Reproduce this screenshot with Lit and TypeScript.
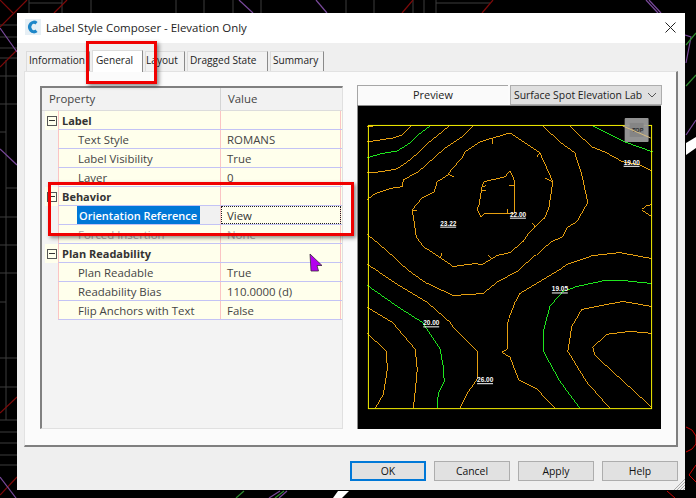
import { LitElement, html, css, svg } from "lit";
import { customElement } from "lit/decorators.js";

type Row = { name: string; value?: string; cat?: boolean; dim?: boolean; sel?: boolean };

const ROWS: Row[] = [
  { name: "Label", cat: true },
  { name: "Text Style", value: "ROMANS" },
  { name: "Label Visibility", value: "True" },
  { name: "Layer", value: "0" },
  { name: "Behavior", cat: true },
  { name: "Orientation Reference", value: "View", sel: true },
  { name: "Forced Insertion", value: "None", dim: true },
  { name: "Plan Readability", cat: true },
  { name: "Plan Readable", value: "True" },
  { name: "Readability Bias", value: "110.0000 (d)" },
  { name: "Flip Anchors with Text", value: "False" },
];

// label, width, left padding
const TABS: [string, number, number][] = [
  ["Information", 64, 2],
  ["General", 51, 3],
  ["Layout", 40, 0],
  ["Dragged State", 81, 2],
  ["Summary", 54, 2],
];

const ORANGE = [
  "367,127 373,126",
  "367,142 393,138 402,135 411,126",
  "367,173 380,172 397,169 407,162 418,153 428,143 438,135 449,126",
  "367,200 373,195 380,192 393,188 402,187 403,180 418,172 435,157 445,148 462,137 473,126",
  "412,210 422,198 434,192 437,182 448,175 451,170 462,158 465,152 480,142 493,138 510,133 540,153 553,182 549,208 545,218 530,232 523,242 510,253 497,256 482,265 475,264 453,267 440,258 423,247 416,237 412,210",
  "492,139 493,144", "540,153 537,157", "553,182 545,178", "532,223 535,227", "487,255 491,259", "440,258 442,253", "412,211 417,211", "449,175 454,177",
  "484,182 505,177 510,171 515,182 514,214 484,214 481,217 477,210 479,205 482,187 484,182",
  "482,187 486,186", "481,191 486,191", "509,186 514,186", "507,209 507,214",
  "543,126 560,142 575,153 582,175 588,203 577,222 567,228 563,237 552,242 542,250 527,263 517,272 498,282 483,294 470,295 453,296 425,283 407,270 393,257 377,243 367,235",
  "367,265 375,270 397,285 427,303 450,323 453,328 477,352 477,380 468,393 460,409",
  "367,308 392,323 415,350 417,370 415,392 413,409",
  "367,334 386,352 387,370 383,395 375,409",
  "652,259 620,253 593,256 567,265 560,270 520,294 515,303 507,324 507,350 502,353 510,358 519,381 537,390 555,409",
  "652,307 623,302 582,310 572,327 568,352 587,383 610,409",
  "652,334 630,332 607,335 593,348 595,356 652,408",
  "652,205 647,206 642,210 652,217",
  "570,126 592,147 605,152 623,162 640,165 652,171",
];

const GREEN = [
  "367,158 380,154 397,151 410,143 418,135 430,126",
  "593,126 625,142 653,152",
  "367,286 397,307 422,323 440,350 443,367 444,382 438,395 437,409",
  "652,284 623,281 605,281 577,287 563,292 550,307 544,330 544,353 560,382 580,409",
];

const SPOTS: [number, number, string][] = [
  [440, 226, "23.22"], [510, 217, "22.00"], [624, 165, "19.00"],
  [423, 326, "20.00"], [552, 292, "19.05"], [477, 383, "26.00"],
];

const GRAY_LINES = [
  "29,0 29,13", "62,0 62,13", "91,0 91,13", "176,0 176,13", "204,0 204,13", "233,0 233,13", "261,0 261,13",
  "346,0 346,13", "374,0 374,13", "413,0 413,13", "424,0 424,13", "436,0 436,13", "29,3 62,3", "436,3 490,3",
  "6,60 6,420",
  ...[25, 37, 48, 58, 76, 104, 217, 245, 273, 358, 387, 420, 432, 443, 455, 465].map((y) => `0,${y} 17,${y}`),
  "0,132 6,132", "0,302 6,302", "6,188 17,188",
];

const RED_LINES = [
  "0,0 13,13", "27,0 0,27", "17,50 0,67", "17,397 0,413", "17,477 0,495", "67,0 54,13", "413,0 402,13", "493,0 482,13",
  "686,427 692,430 696,436 696,444 692,449 686,452", "696,465 689,475 696,482", "667,491 675,498",
];

const PURPLE_LINES = [
  "0,28 17,52", "0,149 17,165", "0,477 16,498", "239,0 253,13", "316,0 327,13", "649,0 661,13", "646,0 658,13",
  "685,35 691,37 686,63", "686,135 696,120", "280,491 269,498", "287,491 279,498",
];

const GREEN_LINES = ["686,45 696,33", "686,86 696,75", "244,491 236,498", "284,491 275,498"];

@customElement("app-root")
export class AppRoot extends LitElement {
  static styles = css`
    :host {
      display: block;
      position: relative;
      width: 696px;
      height: 498px;
      overflow: hidden;
      background: #000;
      font-family: "Open Sans", sans-serif;
      font-size: 11.4px;
      color: #222;
    }
    .cad {
      position: absolute;
      inset: 0;
    }
    .cad polyline {
      fill: none;
    }
    .l-gray { stroke: #3c3c3c; }
    .l-red { stroke: #7d0a0a; stroke-width: 1.2; }
    .l-red2 { stroke: #d00000; }
    .l-purple { stroke: #7a4a9c; stroke-width: 1.2; }
    .l-green { stroke: #2f8a2f; stroke-width: 1.2; }

    .dialog {
      position: absolute;
      left: 17px;
      top: 13px;
      width: 668px;
      height: 477px;
      background: #efefef;
      display: flex;
      flex-direction: column;
    }
    .titlebar {
      height: 30px;
      box-sizing: border-box;
      background: #fff;
      display: flex;
      align-items: center;
      padding: 0 9px 2px 8px;
      gap: 5px;
      font-size: 11.45px;
      color: #222;
    }
    .titlebar .title {
      flex: 1;
    }
    .logo {
      width: 16px;
      height: 16px;
      background: #e6eff5;
      display: block;
    }
    .tabs {
      display: flex;
      align-items: flex-end;
      gap: 2px;
      height: 20px;
      margin: 8px 0 0 9px;
      font-size: 10.1px;
    }
    .tab {
      height: 20px;
      line-height: 17px;
      background: #f2f2f2;
      border-top: 1px solid #dcdcdc;
      border-left: 1px solid #dcdcdc;
      border-right: 1px solid #8a8a8a;
      box-sizing: border-box;
      color: #222;
      white-space: nowrap;
    }
    .tab.active {
      height: 22px;
      background: #fff;
      padding-top: 1px;
      border-left: 1px solid #ddd;
      margin-bottom: -1px;
      position: relative;
      z-index: 1;
    }
    .panel {
      margin: 0 7px;
      height: 376px;
      box-sizing: border-box;
      background: #fbfbfb;
      border: 1px solid #e2e2e2;
      border-right: 2px solid #7f7f7f;
      border-bottom: 2px solid #7f7f7f;
      padding: 14px 16px 16px 15px;
      display: flex;
      gap: 14px;
    }
    .grid {
      width: 303px;
      flex: none;
      box-sizing: border-box;
      background: #f3f3f3;
      border-left: 2px solid #808080;
      border-top: 2px solid #808080;
      border-bottom: 1px solid #e0e0e0;
      border-right: 1px solid #e0e0e0;
    }
    .grid-head {
      display: flex;
      height: 23px;
      box-sizing: border-box;
      line-height: 21px;
      color: #444;
      background: #f2f2f2;
      border-bottom: 1px solid #dcdcdc;
    }
    .grid-head .h1 {
      width: 179px;
      padding-left: 7px;
      box-sizing: border-box;
      border-right: 1px solid #d4d4d4;
    }
    .grid-head .h2 {
      padding-left: 7px;
    }
    .row {
      display: flex;
      height: 19px;
      margin-left: 3px;
    }
    .gut {
      width: 13px;
      flex: none;
      display: flex;
      align-items: center;
      justify-content: center;
    }
    .row.cat .gut {
      background: #ffffec;
    }
    .box {
      width: 10px;
      height: 10px;
      box-sizing: border-box;
      border: 1px solid #555;
      display: flex;
      align-items: center;
      justify-content: center;
    }
    .box i {
      width: 6px;
      height: 1px;
      background: #333;
    }
    .cells {
      flex: 1;
      display: flex;
      background: #ffffec;
      border-bottom: 1px solid #c3c3f5;
      border-left: 1px solid #fbc4c4;
      line-height: 20px;
      color: #444;
    }
    .name {
      width: 162px;
      box-sizing: border-box;
      padding-left: 19px;
      border-right: 1px solid #fbc4c4;
      white-space: nowrap;
      overflow: hidden;
    }
    .row.cat .name {
      padding-left: 3px;
      font-size: 11px;
      font-weight: 700;
      color: #333;
    }
    .name.sel {
      background: linear-gradient(to right, #ffffec 18px, #0078d7 18px, #0078d7 141px, #f1f1f1 141px);
      color: #fff;
      font-size: 11px;
      font-weight: 600;
      padding-left: 20px;
    }
    .val {
      width: 120px;
      box-sizing: border-box;
      padding-left: 6px;
      border-right: 1px solid #fbc4c4;
      overflow: hidden;
    }
    .val.focus {
      outline: 1px dotted #222;
      outline-offset: -1px;
      color: #333;
    }
    .dim {
      color: #a8a8a8;
    }
    .preview-pane {
      width: 305px;
      margin-top: -1px;
      display: flex;
      flex-direction: column;
    }
    .preview-head {
      display: flex;
      height: 20px;
      gap: 2px;
    }
    .ptab {
      width: 151px;
      box-sizing: border-box;
      background: #fafafa;
      border-top: 1px solid #a6a6a6;
      border-left: 1px solid #a6a6a6;
      text-align: center;
      line-height: 18px;
      font-size: 10.9px;
      color: #222;
    }
    .combo {
      width: 152px;
      box-sizing: border-box;
      background: #dfdfdf;
      border: 1px solid #adadad;
      display: flex;
      align-items: center;
      justify-content: space-between;
      padding: 0 4px 0 3px;
      color: #222;
      font-size: 10.4px;
      white-space: nowrap;
    }
    .view {
      display: block;
      width: 303px;
      height: 324px;
      background: #000;
      border-top: 1px solid #8c8c8c;
      border-left: 1px solid #8c8c8c;
    }
    .view polyline {
      fill: none;
      stroke-width: 1;
      shape-rendering: crispEdges;
    }
    .c-orange { stroke: #e8a010; }
    .c-green { stroke: #1ee81e; }
    .view text {
      font: 700 6.5px "Liberation Sans", sans-serif;
      fill: #fff;
    }
    .view text.top {
      font-size: 5.5px;
      fill: #2e2e2e;
    }
    .footer {
      display: flex;
      justify-content: flex-end;
      gap: 8px;
      padding: 14px 7px 0 0;
    }
    .btn {
      width: 76px;
      height: 20px;
      box-sizing: border-box;
      border: 1px solid #adadad;
      background: #e1e1e1;
      text-align: center;
      line-height: 18px;
      font-size: 10.4px;
      color: #111;
    }
    .btn.primary {
      border: 2px solid #0078d7;
      line-height: 16px;
    }
    .grip {
      position: absolute;
      right: 0;
      bottom: 0;
    }
    .mark {
      position: absolute;
      box-sizing: border-box;
      border: 3px solid #f00000;
      box-shadow: 2px 2px 4px rgba(0, 0, 0, 0.45);
    }
    .mark.general {
      left: 86px;
      top: 41px;
      width: 71px;
      height: 43px;
    }
    .mark.behavior {
      left: 48px;
      top: 182px;
      width: 306px;
      height: 54px;
    }
    .cursor {
      position: absolute;
      left: 309px;
      top: 253px;
    }
  `;

  renderRow(r: Row) {
    if (r.cat) {
      return html`<div class="row cat">
        <div class="gut"><span class="box"><i></i></span></div>
        <div class="cells"><div class="name">${r.name}</div><div class="val"></div></div>
      </div>`;
    }
    return html`<div class="row">
      <div class="gut"></div>
      <div class="cells">
        <div class="name ${r.sel ? "sel" : ""} ${r.dim ? "dim" : ""}">${r.name}</div>
        <div class="val ${r.sel ? "focus" : ""} ${r.dim ? "dim" : ""}">${r.value}</div>
      </div>
    </div>`;
  }

  render() {
    return html`
      <svg class="cad" width="696" height="498">
        ${GRAY_LINES.map((p) => svg`<polyline class="l-gray" points=${p}></polyline>`)}
        ${RED_LINES.map((p, i) => svg`<polyline class=${i > 7 ? "l-red2" : "l-red"} points=${p}></polyline>`)}
        ${PURPLE_LINES.map((p) => svg`<polyline class="l-purple" points=${p}></polyline>`)}
        ${GREEN_LINES.map((p) => svg`<polyline class="l-green" points=${p}></polyline>`)}
        <polygon fill="#fff" points="686,143 696,137 696,148 686,155"></polygon>
        <polygon fill="#fff" points="338,491 349,491 342,498 333,498"></polygon>
      </svg>

      <div class="dialog">
        <div class="titlebar">
          <svg class="logo" viewBox="0 0 16 16">
            <path d="M11.5 4.2 A4.2 4.8 0 1 0 11.5 11.8" fill="none" stroke="#1d86c8" stroke-width="3.2"></path>
          </svg>
          <span class="title">Label Style Composer - Elevation Only</span>
          <svg width="11" height="11" viewBox="0 0 11 11">
            <path d="M0.5 0.5 L10.5 10.5 M10.5 0.5 L0.5 10.5" stroke="#222" stroke-width="1"></path>
          </svg>
        </div>

        <div class="tabs">
          ${TABS.map(
            ([label, w, pad]) =>
              html`<div class="tab ${label === "General" ? "active" : ""}" style="width:${w}px;padding-left:${pad}px">${label}</div>`,
          )}
        </div>

        <div class="panel">
          <div class="grid">
            <div class="grid-head"><div class="h1">Property</div><div class="h2">Value</div></div>
            ${ROWS.map((r) => this.renderRow(r))}
          </div>
          <div class="preview-pane">
            <div class="preview-head">
              <div class="ptab">Preview</div>
              <div class="combo">
                <span>Surface Spot Elevation Lab</span>
                <svg width="10" height="6" viewBox="0 0 10 6">
                  <path d="M1 1 L5 5 L9 1" fill="none" stroke="#555"></path>
                </svg>
              </div>
            </div>
            <svg class="view" viewBox="358 106 303 324">
              ${ORANGE.map((p) => svg`<polyline class="c-orange" points=${p}></polyline>`)}
              ${GREEN.map((p) => svg`<polyline class="c-green" points=${p}></polyline>`)}
              ${SPOTS.map(
                ([x, y, t]) => svg`
                  <text x=${x} y=${y}>${t}</text>
                  <line x1=${x} x2=${x + 16} y1=${y + 1.5} y2=${y + 1.5} stroke="#fff"></line>
                `,
              )}
              <rect x="368" y="125.5" width="284" height="284" fill="none" stroke="#f5f000" stroke-width="1"></rect>
              <rect x="625" y="118" width="24" height="24" rx="1" fill="#9a9a9a" fill-opacity="0.95"></rect>
              <rect x="630" y="123" width="14" height="14" fill="#858585"></rect>
              <text x="632.5" y="132" class="top">TOP</text>
              <line x1="623" y1="126" x2="651" y2="138" stroke="#d8bd80"></line>
            </svg>
          </div>
        </div>

        <div class="footer">
          <div class="btn primary">OK</div>
          <div class="btn">Cancel</div>
          <div class="btn">Apply</div>
          <div class="btn">Help</div>
        </div>
        <svg class="grip" width="11" height="11" viewBox="0 0 11 11">
          <path d="M11 0 L0 11 M11 3 L3 11 M11 6 L6 11 M11 9 L9 11" stroke="#a8a8a8"></path>
        </svg>
      </div>

      <div class="mark general"></div>
      <div class="mark behavior"></div>
      <svg class="cursor" width="15" height="20" viewBox="0 0 15 20">
        <path d="M1 1 L13 12.5 L8 12.5 L9.5 18 L2 18 Z" fill="#b400ef" stroke="#3a2a3a" stroke-width="0.8"></path>
      </svg>
    `;
  }
}
